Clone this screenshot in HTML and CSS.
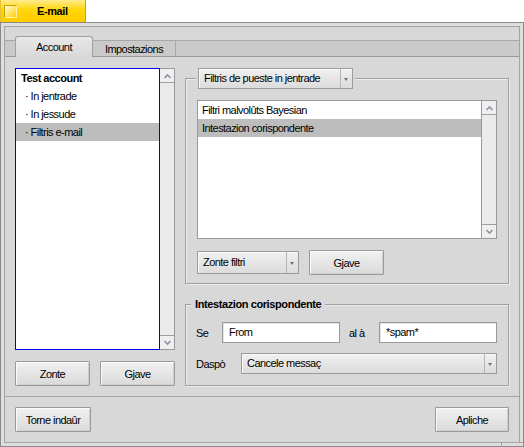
FILE: index.html
```html
<!DOCTYPE html>
<html>
<head>
<meta charset="utf-8">
<link rel="stylesheet" href="styles.css">
</head>
<body>
<div class="wtab"><span class="close"></span><span class="wtitle">E-mail</span></div>
<div class="window">
  <div class="inner">
    <div class="tabbar">
      <div class="tab active">Account</div>
      <div class="tab">Impostazions</div>
    </div>
    <div class="panel">
      <div class="leftcol">
        <div class="listbox">
          <ul class="items focus">
            <li class="acct">Test account</li>
            <li class="sub">· In jentrade</li>
            <li class="sub">· In jessude</li>
            <li class="sub sel">· Filtris e-mail</li>
          </ul>
          <div class="vscroll">
            <div class="arrow"><svg width="9" height="6" viewBox="0 0 9 6"><polyline points="1.5,5 4.5,2 7.5,5" fill="none" stroke="#8a94a4" stroke-width="1.6"/></svg></div>
            <div class="track"></div>
            <div class="arrow"><svg width="9" height="6" viewBox="0 0 9 6"><polyline points="1.5,1 4.5,4 7.5,1" fill="none" stroke="#8a94a4" stroke-width="1.6"/></svg></div>
          </div>
        </div>
        <div class="btnrow">
          <button class="btn">Zonte</button>
          <button class="btn">Gjave</button>
        </div>
      </div>
      <div class="rightcol">
        <div class="box box1">
          <div class="boxlabel">
            <div class="menu menu-top"><span class="mtext">Filtris de pueste in jentrade</span><span class="marrow"></span></div>
          </div>
          <div class="listbox list2">
            <ul class="items">
              <li class="plain">Filtri malvolûts Bayesian</li>
              <li class="plain sel">Intestazion corispondente</li>
            </ul>
            <div class="vscroll">
              <div class="arrow"><svg width="9" height="6" viewBox="0 0 9 6"><polyline points="1.5,5 4.5,2 7.5,5" fill="none" stroke="#8a94a4" stroke-width="1.6"/></svg></div>
              <div class="track"></div>
              <div class="arrow"><svg width="9" height="6" viewBox="0 0 9 6"><polyline points="1.5,1 4.5,4 7.5,1" fill="none" stroke="#8a94a4" stroke-width="1.6"/></svg></div>
            </div>
          </div>
          <div class="row1">
            <div class="menu menu-add"><span class="mtext">Zonte filtri</span><span class="marrow"></span></div>
            <button class="btn btn-del">Gjave</button>
          </div>
        </div>
        <div class="box box2">
          <div class="boxlabel2">Intestazion corispondente</div>
          <div class="fields">
            <span class="flabel">Se</span>
            <div class="tfield">From</div>
            <span class="flabel al">al à</span>
            <div class="tfield">*spam*</div>
          </div>
          <div class="action">
            <span class="flabel">Daspò</span>
            <div class="menu menu-act"><span class="mtext">Cancele messaç</span><span class="marrow"></span></div>
          </div>
        </div>
      </div>
    </div>
    <div class="footer">
      <button class="btn btn-revert">Torne indaûr</button>
      <button class="btn btn-apply">Apliche</button>
    </div>
  </div>
  <span class="knob-h"></span>
  <span class="knob-v"></span>
</div>
</body>
</html>
```
FILE: styles.css
```css
* { box-sizing: border-box; }
html, body { margin: 0; padding: 0; }
body {
  width: 524px;
  height: 447px;
  overflow: hidden;
  background: #ffffff;
  font-family: "Liberation Sans", Arial, sans-serif;
  font-size: 11px;
  letter-spacing: -0.55px;
  color: #000;
}
ul { list-style: none; margin: 0; padding: 0; }
button { font: inherit; letter-spacing: inherit; color: inherit; margin: 0; padding: 0; }

/* window tab */
.wtab {
  width: 86px;
  height: 22px;
  display: flex;
  align-items: center;
  background: linear-gradient(#ffec8c, #ffd60a 45%, #ffcb00);
  border-left: 1px solid #e6c230;
  border-right: 1px solid #c9a200;
}
.close {
  width: 13px;
  height: 13px;
  margin-left: 3px;
  border: 1px solid #c6a000;
  border-right-color: #fff0a0;
  border-bottom-color: #fff0a0;
  background: linear-gradient(135deg, #fffbe6, #ffe466 55%, #ffd000);
}
.wtitle {
  margin-left: 20px;
  font-weight: bold;
  letter-spacing: -0.4px;
}

/* window frame */
.window {
  position: relative;
  width: 524px;
  height: 425px;
  border: 1px solid #8a8a8a;
  background: #dedede;
  padding: 3px;
}
.inner {
  height: 100%;
  border: 1px solid #a4a4a4;
  background: #d8d8d8;
}
.knob-h {
  position: absolute;
  left: 500px;
  top: 419px;
  width: 22px;
  height: 1px;
  background: #a4a4a4;
}
.knob-v {
  position: absolute;
  left: 500px;
  top: 419px;
  width: 1px;
  height: 5px;
  background: #a4a4a4;
}

/* tabs */
.tabbar {
  margin-top: 13px;
  height: 17px;
  border-top: 1px solid #a8a8a8;
  border-bottom: 1px solid #999;
  background: #cacaca;
  display: flex;
  align-items: flex-start;
  padding-left: 10px;
}
.tab {
  height: 15px;
  line-height: 14px;
  text-align: center;
}
.tab.active {
  position: relative;
  width: 78px;
  height: 21px;
  margin-top: -5px;
  line-height: 20px;
  border: 1px solid #a0a0a0;
  border-bottom: none;
  border-radius: 3px 3px 0 0;
  background: linear-gradient(#e8e8e8, #d8d8d8);
}
.tab:not(.active) {
  width: 83px;
  border-right: 1px solid #a8a8a8;
  line-height: 16px;
}

/* panel */
.panel {
  height: 340px;
  border-bottom: 1px solid #a4a4a4;
  display: grid;
  grid-template-columns: 160px 324px;
  column-gap: 10px;
  padding: 11px 10px 0 10px;
}
.leftcol {
  display: flex;
  flex-direction: column;
}
.listbox {
  display: flex;
  background: #fff;
}
.leftcol .listbox { height: 282px; }
.items {
  flex: 1;
  border: 1px solid #9a9a9a;
  background: #fff;
  padding-top: 0;
}
.items.focus { border-color: #0000e5; }
.items li {
  height: 18px;
  line-height: 18px;
  white-space: nowrap;
}
.acct { font-weight: bold; padding-left: 5px; letter-spacing: -0.5px; }
.sub { padding-left: 9px; }
.plain { padding-left: 4px; }
.sel { background: #bdbdbd; }

.vscroll {
  width: 15px;
  display: flex;
  flex-direction: column;
  border: 1px solid #9a9a9a;
  border-left: none;
  background: #ececec;
}
.arrow {
  height: 14px;
  flex: none;
  display: flex;
  align-items: center;
  justify-content: center;
  background: #efefef;
}
.arrow:first-child { border-bottom: 1px solid #a0a0a0; }
.arrow:last-child { border-top: 1px solid #a0a0a0; }
.track { flex: 1; background: #ebebeb; }

.btnrow {
  margin-top: 11px;
  display: flex;
  justify-content: space-between;
}
.btn {
  height: 25px;
  width: 75px;
  border: 1px solid #999;
  border-radius: 1px;
  background: linear-gradient(#f1f1f1, #dadada);
  box-shadow: inset 1px 1px 0 #fbfbfb, inset -1px -1px 0 #cfcfcf;
  text-align: center;
  line-height: 22px;
}

/* right column boxes */
.rightcol { display: flex; flex-direction: column; }
.box {
  border: 1px solid #a0a0a0;
  box-shadow: 1px 1px 0 #ececec, inset 1px 1px 0 #ececec;
}
.box1 {
  margin-top: 10px;
  height: 206px;
  padding: 0 11px 8px 11px;
}
.boxlabel {
  margin-top: -11px;
  margin-left: -1px;
  padding: 0 2px;
  background: #d8d8d8;
  width: max-content;
}
.menu {
  height: 21px;
  display: flex;
  border: 1px solid #9c9c9c;
  background: linear-gradient(#f0f0f0, #dcdcdc);
  box-shadow: inset 1px 1px 0 #fafafa;
}
.mtext {
  flex: 1;
  padding-left: 5px;
  line-height: 19px;
  white-space: nowrap;
}
.marrow {
  width: 12px;
  border-left: 1px solid #b4b4b4;
  position: relative;
}
.marrow::after {
  content: "";
  position: absolute;
  left: 3px;
  top: 9px;
  border-left: 2.5px solid transparent;
  border-right: 2.5px solid transparent;
  border-top: 3px solid #707070;
}
.menu-top { width: 155px; }
.list2 {
  margin-top: 11px;
  height: 139px;
}
.row1 {
  margin-top: 11px;
  height: 25px;
  display: flex;
  align-items: center;
  gap: 10px;
}
.menu-add { width: 102px; height: 23px; }
.menu-add .mtext { line-height: 21px; }
.menu-add .marrow::after { top: 10px; }

.box2 {
  margin-top: 20px;
  height: 82px;
  padding: 0 11px 0 9px;
}
.boxlabel2 {
  margin-top: -8px;
  margin-left: -4px;
  height: 15px;
  line-height: 15px;
  padding: 0 4px 0 4px;
  background: #d8d8d8;
  width: max-content;
  font-weight: bold;
  letter-spacing: -0.4px;
}
.fields {
  margin-top: 10px;
  height: 21px;
  display: grid;
  grid-template-columns: 27px 118px 39px 118px;
  align-items: center;
}
.flabel { padding-left: 1px; }
.al { padding-left: 9px; }
.tfield {
  height: 21px;
  line-height: 19px;
  border: 1px solid #9a9a9a;
  background: #fff;
  padding-left: 6px;
  box-shadow: inset 1px 1px 0 #e6e6e6;
}
.action {
  margin-top: 10px;
  height: 21px;
  display: grid;
  grid-template-columns: 46px 256px;
  align-items: center;
}
.menu-act { width: 256px; }

/* footer */
.footer {
  padding: 10px 10px 0 10px;
  display: flex;
  justify-content: space-between;
}
.btn-revert { width: 76px; }
.btn-apply { width: 74px; }
```
